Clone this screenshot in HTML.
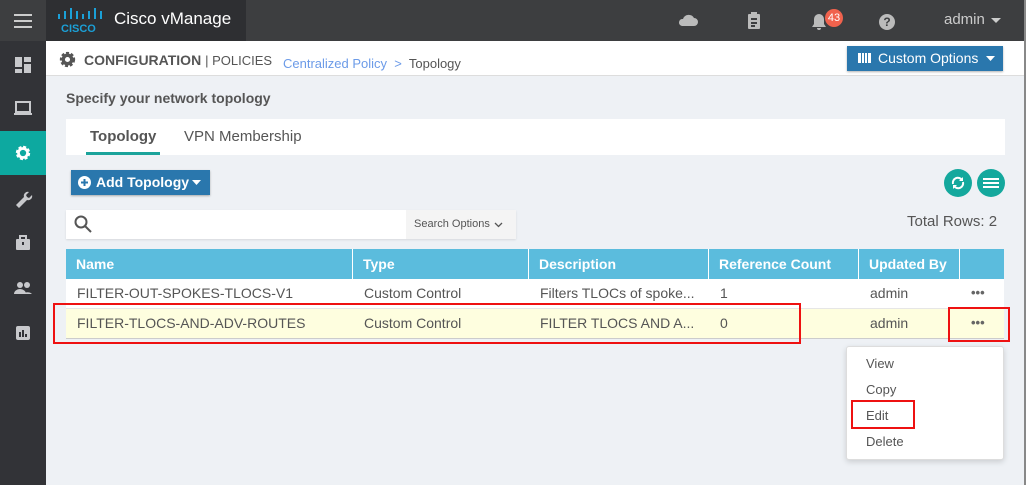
<!DOCTYPE html>
<html><head><meta charset="utf-8"><style>
*{margin:0;padding:0;box-sizing:border-box}
body{width:1026px;height:485px;overflow:hidden;background:#eef1f5;font-family:"Liberation Sans",sans-serif;position:relative;color:#555}
.a{position:absolute}
.top{left:0;top:0;width:1026px;height:41px;background:#3d3e40}
.side{left:0;top:41px;width:46px;height:444px;background:#323337}
.logo{left:46px;top:0;width:200px;height:41px;background:#2e2f32}
.hdr{left:46px;top:41px;width:980px;height:35px;background:#fff;border-bottom:1px solid #ddd}
.btn{background:#2a77ad;color:#fff;font-weight:bold;font-size:14px;box-shadow:0 1px 2px rgba(0,0,0,.3)}
.th{top:249px;height:30px;background:#5bbcdd;color:#fff;font-weight:bold;font-size:14px;line-height:30px;padding-left:10px;border-right:1px solid #fff}
.td{height:30px;line-height:30px;font-size:14px;color:#555;padding-left:11px;white-space:nowrap}
.red{border:2px solid #e11}
.sic{left:13px;width:20px;height:20px;fill:#c8c9cc}
</style></head><body>
<div class="a top"></div>
<div class="a side"></div>
<div class="a logo"></div>
<svg class="a" style="left:14px;top:14px" width="18" height="14"><rect y="0" width="18" height="2" fill="#ccc"/><rect y="6" width="18" height="2" fill="#ccc"/><rect y="12" width="18" height="2" fill="#ccc"/></svg>
<svg class="a" style="left:57px;top:8px" width="46" height="26"><g fill="#1ba0d7"><rect x="1" y="6" width="2" height="5"/><rect x="7" y="3" width="2" height="8"/><rect x="13" y="0" width="2" height="11"/><rect x="19" y="3" width="2" height="8"/><rect x="25" y="6" width="2" height="5"/><rect x="31" y="3" width="2" height="8"/><rect x="37" y="0" width="2" height="11"/><rect x="43" y="3" width="2" height="8"/></g><text x="4" y="24" font-size="11" font-weight="bold" fill="#1ba0d7" font-family="Liberation Sans">CISCO</text></svg>
<div class="a" style="left:114px;top:9px;color:#fff;font-size:17px">Cisco vManage</div>
<svg class="a" style="left:678px;top:13px" width="20" height="14"><path d="M4 13h12a4 4 0 0 0 0-8 6 6 0 0 0-11 1 3.5 3.5 0 0 0-1 7z" fill="#bbb"/></svg>
<svg class="a" style="left:747px;top:12px" width="14" height="18"><rect x="1" y="2" width="12" height="15" rx="1" fill="#bbb"/><rect x="4" y="0" width="6" height="4" fill="#bbb"/><rect x="4" y="6" width="6" height="2" fill="#3d3e40"/><rect x="4" y="10" width="6" height="2" fill="#3d3e40"/><rect x="4" y="13" width="4" height="2" fill="#3d3e40"/></svg>
<svg class="a" style="left:812px;top:14px" width="14" height="16"><path d="M7 0a5 5 0 0 1 5 5v5l2 3H0l2-3V5a5 5 0 0 1 5-5zM5 14h4a2 2 0 0 1-4 0z" fill="#bbb"/></svg>
<div class="a" style="left:825px;top:9px;width:18px;height:18px;border-radius:9px;background:#f0624d;color:#fff;font-size:11px;text-align:center;line-height:18px">43</div>
<div class="a" style="left:879px;top:14px;width:16px;height:16px;border-radius:8px;background:#bbb;color:#3d3e40;font-size:12px;font-weight:bold;text-align:center;line-height:16px">?</div>
<div class="a" style="left:944px;top:11px;color:#ccc;font-size:15px">admin</div>
<svg class="a" style="left:991px;top:18px" width="10" height="6"><path d="M0 0h10L5 5z" fill="#ccc"/></svg>
<svg class="a sic" style="top:55px" viewBox="0 0 20 20"><rect x="2" y="2" width="7" height="10"/><rect x="11" y="2" width="7" height="5"/><rect x="11" y="9" width="7" height="9"/><rect x="2" y="14" width="7" height="4"/></svg>
<svg class="a sic" style="top:98px" viewBox="0 0 20 20"><rect x="3" y="4" width="14" height="10" fill="none" stroke="#c8c9cc" stroke-width="2"/><rect x="1" y="15" width="18" height="2"/></svg>
<div class="a" style="left:0;top:131px;width:46px;height:44px;background:#0da9a0"></div>
<svg class="a" style="left:14px;top:144px" width="18" height="18" viewBox="0 0 20 20"><circle cx="10" cy="10" r="6" fill="none" stroke="#fff" stroke-width="4" stroke-dasharray="3 1.7"/><circle cx="10" cy="10" r="5" fill="none" stroke="#fff" stroke-width="3"/></svg>
<svg class="a sic" style="top:188px" viewBox="0 0 20 20"><path d="M3 17l8-8a4 4 0 0 1 5-5l-3 3 1 2 2 1 3-3a4 4 0 0 1-5 5l-8 8z"/></svg>
<svg class="a sic" style="top:233px" viewBox="0 0 20 20"><rect x="3" y="6" width="14" height="11" rx="1"/><rect x="7" y="3" width="6" height="4" fill="none" stroke="#c8c9cc" stroke-width="2"/><rect x="9" y="9" width="2" height="3" fill="#323337"/></svg>
<svg class="a sic" style="top:278px" viewBox="0 0 20 20"><circle cx="7" cy="7" r="3"/><circle cx="14" cy="7" r="3"/><path d="M1 16a6 5 0 0 1 12 0zM10 16a6 5 0 0 1 9 0z"/></svg>
<svg class="a sic" style="top:323px" viewBox="0 0 20 20"><rect x="3" y="3" width="14" height="14" rx="2"/><rect x="6" y="9" width="2" height="5" fill="#323337"/><rect x="9" y="7" width="2" height="7" fill="#323337"/><rect x="12" y="11" width="2" height="3" fill="#323337"/></svg>
<div class="a hdr"></div>
<svg class="a" style="left:59px;top:51px" width="17" height="17" viewBox="0 0 20 20"><circle cx="10" cy="10" r="7" fill="none" stroke="#555" stroke-width="4" stroke-dasharray="3.2 2"/><circle cx="10" cy="10" r="5" fill="none" stroke="#555" stroke-width="4"/></svg>
<div class="a" style="left:84px;top:52px;font-size:14px;font-weight:bold;color:#555">CONFIGURATION <span style="font-weight:normal;font-size:13px">| POLICIES</span></div>
<div class="a" style="left:283px;top:56px;font-size:13px;color:#6c9be8">Centralized Policy <span>&nbsp;&gt;&nbsp;</span> <span style="color:#555">Topology</span></div>
<div class="a btn" style="left:847px;top:46px;width:156px;height:25px;line-height:25px;padding-left:31px;font-weight:normal">Custom Options</div>
<svg class="a" style="left:858px;top:53px" width="13" height="10"><rect width="13" height="10" fill="#fff"/><g fill="#2a77ad"><rect x="3" width="1" height="10"/><rect x="6" width="1" height="10"/><rect x="9" width="1" height="10"/></g></svg>
<svg class="a" style="left:986px;top:56px" width="9" height="5"><path d="M0 0h9L4.5 5z" fill="#fff"/></svg>
<div class="a" style="left:66px;top:90px;font-size:14px;font-weight:bold;color:#555">Specify your network topology</div>
<div class="a" style="left:66px;top:119px;width:939px;height:36px;background:#fff"></div>
<div class="a" style="left:90px;top:128px;font-size:15px;font-weight:bold;color:#555">Topology</div>
<div class="a" style="left:86px;top:152px;width:74px;height:3px;background:#1ba39b"></div>
<div class="a" style="left:184px;top:128px;font-size:15px;color:#555">VPN Membership</div>
<div class="a btn" style="left:71px;top:170px;width:139px;height:25px;line-height:25px;padding-left:25px">Add Topology</div>
<svg class="a" style="left:78px;top:176px" width="13" height="13"><circle cx="6.5" cy="6.5" r="6.5" fill="#fff"/><path d="M6.5 3v7M3 6.5h7" stroke="#2a77ad" stroke-width="2"/></svg>
<svg class="a" style="left:192px;top:180px" width="9" height="5"><path d="M0 0h9L4.5 5z" fill="#fff"/></svg>
<div class="a" style="left:944px;top:169px;width:28px;height:28px;border-radius:14px;background:#14a89d"></div>
<svg class="a" style="left:950px;top:175px" width="16" height="16" viewBox="0 0 16 16"><path d="M3 9a5 5 0 0 1 9-4M13 7a5 5 0 0 1-9 4" fill="none" stroke="#fff" stroke-width="2"/><path d="M13 2v4H9zM3 14v-4h4z" fill="#fff"/></svg>
<div class="a" style="left:977px;top:169px;width:28px;height:28px;border-radius:14px;background:#14a89d"></div>
<svg class="a" style="left:983px;top:176px" width="16" height="14"><rect y="2" width="16" height="2" fill="#fff"/><rect y="6" width="16" height="2" fill="#fff"/><rect y="10" width="16" height="2" fill="#fff"/></svg>
<div class="a" style="left:66px;top:210px;width:450px;height:29px;background:#fff;box-shadow:0 1px 2px rgba(0,0,0,.1)"></div>
<svg class="a" style="left:74px;top:215px" width="18" height="18"><circle cx="7" cy="7" r="5.5" fill="none" stroke="#555" stroke-width="2"/><path d="M11 11l6 6" stroke="#555" stroke-width="2"/></svg>
<div class="a" style="left:406px;top:210px;width:110px;height:29px;background:#f4f4f4;font-size:11px;line-height:29px;padding-left:8px;color:#555">Search Options</div>
<svg class="a" style="left:494px;top:222px" width="9" height="6"><path d="M1 1l3.5 3.5L8 1" fill="none" stroke="#555" stroke-width="1.3"/></svg>
<div class="a" style="left:907px;top:213px;font-size:15px;color:#555">Total Rows: 2</div>
<div class="a th" style="left:66px;width:287px">Name</div>
<div class="a th" style="left:353px;width:176px">Type</div>
<div class="a th" style="left:529px;width:180px">Description</div>
<div class="a th" style="left:709px;width:150px">Reference Count</div>
<div class="a th" style="left:859px;width:101px">Updated By</div>
<div class="a th" style="left:960px;width:44px;border-right:0"></div>
<div class="a" style="left:66px;top:279px;width:938px;height:30px;background:#fff;border-bottom:1px solid #e6e6e6"></div>
<div class="a" style="left:66px;top:309px;width:938px;height:30px;background:#fefedf;border-bottom:1px solid #ccc"></div>
<div class="a td" style="left:66px;top:278px">FILTER-OUT-SPOKES-TLOCS-V1</div>
<div class="a td" style="left:353px;top:278px">Custom Control</div>
<div class="a td" style="left:529px;top:278px">Filters TLOCs of spoke...</div>
<div class="a td" style="left:709px;top:278px">1</div>
<div class="a td" style="left:859px;top:278px">admin</div>
<div class="a" style="left:971px;top:285px;font-size:13px;font-weight:bold;color:#666">•••</div>
<div class="a td" style="left:66px;top:308px">FILTER-TLOCS-AND-ADV-ROUTES</div>
<div class="a td" style="left:353px;top:308px">Custom Control</div>
<div class="a td" style="left:529px;top:308px">FILTER TLOCS AND A...</div>
<div class="a td" style="left:709px;top:308px">0</div>
<div class="a td" style="left:859px;top:308px">admin</div>
<div class="a" style="left:971px;top:315px;font-size:13px;font-weight:bold;color:#666">•••</div>
<div class="a red" style="left:53px;top:303px;width:748px;height:41px"></div>
<div class="a red" style="left:948px;top:307px;width:62px;height:35px"></div>
<div class="a" style="left:846px;top:346px;width:158px;height:114px;background:#fff;border:1px solid #ddd;border-radius:3px;box-shadow:0 2px 6px rgba(0,0,0,.15)"></div>
<div class="a" style="left:866px;top:351px;font-size:13px;line-height:26px;color:#555">View<br>Copy<br>Edit<br>Delete</div>
<div class="a red" style="left:851px;top:400px;width:64px;height:29px"></div>
<div class="a" style="left:1024px;top:0;width:2px;height:485px;background:#888"></div>
</body></html>
